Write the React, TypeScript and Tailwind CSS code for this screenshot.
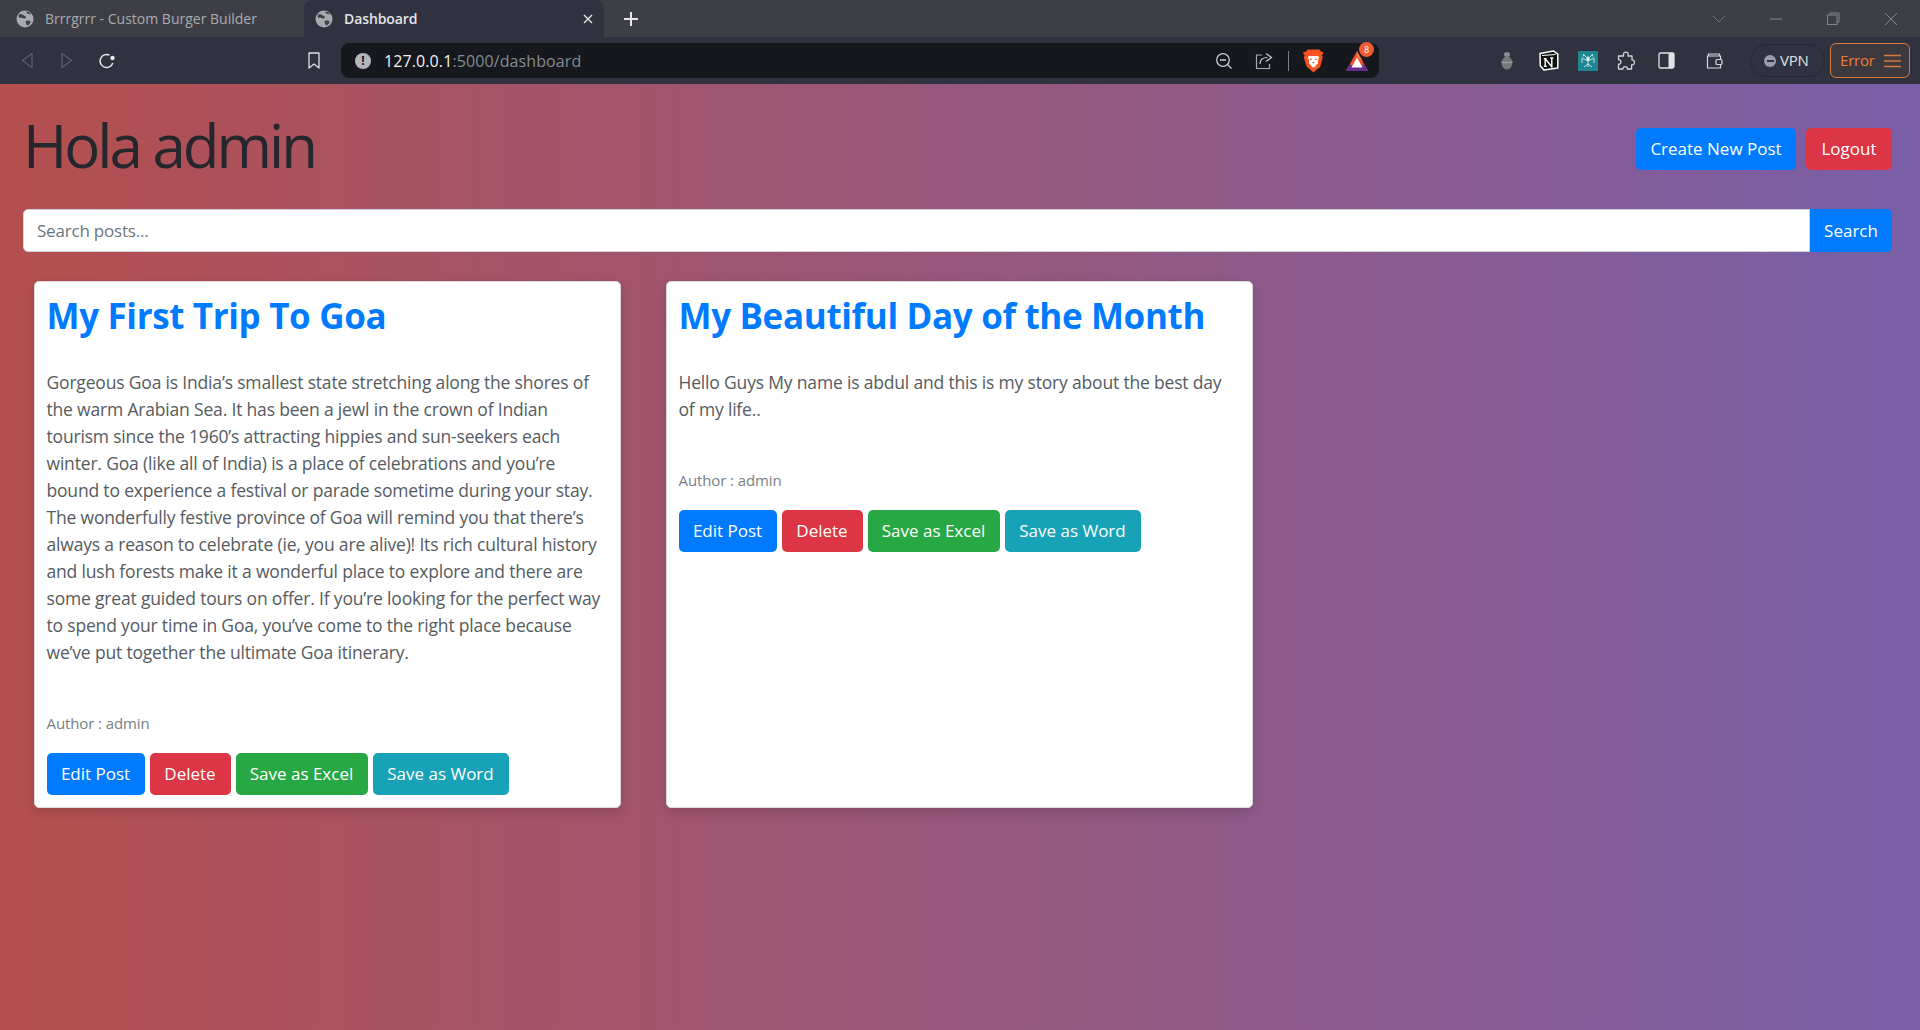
const posts = [
  {
    title: "My First Trip To Goa",
    body: "Gorgeous Goa is India’s smallest state stretching along the shores of the warm Arabian Sea. It has been a jewl in the crown of Indian tourism since the 1960’s attracting hippies and sun-seekers each winter. Goa (like all of India) is a place of celebrations and you’re bound to experience a festival or parade sometime during your stay. The wonderfully festive province of Goa will remind you that there’s always a reason to celebrate (ie, you are alive)! Its rich cultural history and lush forests make it a wonderful place to explore and there are some great guided tours on offer. If you’re looking for the perfect way to spend your time in Goa, you’ve come to the right place because we’ve put together the ultimate Goa itinerary.",
  },
  {
    title: "My Beautiful Day of the Month",
    body: "Hello Guys My name is abdul and this is my story about the best day of my life..",
  },
];

const Globe = () => (
  <svg width="18" height="18" viewBox="0 0 18 18">
    <circle cx="9" cy="9" r="8.5" fill="#a8aab0" />
    <path d="M3 4.500c2-.6 3.500-.2 4.500.8.800.9 2 .6 2.400 1.600.3 1-.9 1.600-2 1.500C6.600 8.300 5.500 7.500 4.500 7.700 3 8 1.800 7 3 4.500ZM10 11c1.500-.6 3.500-.5 4.500.3.500.7-.5 2.700-2.500 4-1 .5-1.600-.3-1.700-1.300-.1-1-1.400-2.400-.3-3Z" fill="#3f4048" />
    <path d="M10.500 1.500c1.500.2 3.600 1 4.500 2.700-1 .4-2.500 0-3.500-.6-.8-.5-1.300-1.400-1-2.100Z" fill="#3f4048" />
  </svg>
);

const Lion = () => (
  <svg width="21" height="24" viewBox="0 0 20 23">
    <path d="M4.500 0.500h11l2 2.200 2 .3-.5 2-1 1 .8 2.200-2.300 8.800-3 2.500-3.500 3-3.500-3-3-2.500L.7 8.200l.8-2.200-1-1L0 3l2.500-.3Z" fill="#f4521f" />
    <path d="M6 6.500l2.500.5L10 6.500l1.500.5 2.500-.5 1.500 1.500-1.500 3.500.5 2-2.500 2.500-.5 1.500h-3l-.5-1.500L5.500 13.500l.5-2L4.500 8Z" fill="#fff" />
    <path d="M8.700 12.500h2.600L10 14.200Z" fill="#f4521f" />
    <path d="M6.500 9.500l2 .6M13.500 9.500l-2 .6" stroke="#f4521f" strokeWidth="1" />
  </svg>
);

const BatLogo = () => (
  <div className="relative h-[22px] w-[24px]">
    <svg width="24" height="22" viewBox="0 0 24 22">
      <path d="M12 1 23 21H1Z" fill="#e8502f" />
      <path d="M12 1 17.500 11 12 7.500Z" fill="#f27a3c" />
      <path d="M5 14 1 21h22l-4-7-3 3H8Z" fill="#662d91" />
      <path d="M12 7.500 17.500 17.500h-11Z" fill="#fff" />
    </svg>
    <span className="absolute top-[-8px] left-[14px] flex h-[15px] w-[15px] items-center justify-center rounded-full bg-[#ee5a32] text-[9px] leading-none text-white">8</span>
  </div>
);

const Notion = () => (
  <svg width="20" height="21" viewBox="0 0 20 21">
    <path d="M1 3.500 14.500 1l4.300 3.200V18L5 20 1.300 15.800Z" fill="#111" stroke="#fff" strokeWidth="1.500" strokeLinejoin="round" />
    <path d="M3 5.500 16.500 4.500" stroke="#fff" strokeWidth="1" />
    <path d="M6.200 8.700v7.600M6.200 8.700l6.600 8V8M4.800 8.700h2.800M11.200 8h3.200M4.800 16.300h3" stroke="#fff" strokeWidth="1.400" fill="none" />
  </svg>
);

const TealSpider = () => (
  <svg width="20" height="20" viewBox="0 0 20 20">
    <rect width="20" height="20" fill="#1f8791" />
    <path d="M10 5v11M10 8 5 3M10 8l5-5M10 10 4 7v5M10 10l6-3v5M10 13l-4 3M10 13l4 3M6 3.500 5 5.500M14 3.500l1 2" stroke="#cfe8ea" strokeWidth=".9" fill="none" />
    <circle cx="10" cy="8" r="1.700" fill="#eaf6f7" />
  </svg>
);

const Bug = () => (
  <svg width="14" height="20" viewBox="0 0 14 20">
    <ellipse cx="7" cy="3.500" rx="3" ry="2.500" fill="#8b8c8f" />
    <ellipse cx="7" cy="12" rx="5.500" ry="6.500" fill="#77787a" />
    <path d="M1.500 11c3 1 8 1 11 0" stroke="#a8a9ab" strokeWidth="1" fill="none" />
  </svg>
);

const ToolIcon = ({ w, children }: { w: string; children: React.ReactNode }) => (
  <div className={`flex shrink-0 items-center justify-center ${w}`}>{children}</div>
);

const PostButton = ({ label, color, width }: { label: string; color: string; width: string }) => (
  <button className={`h-[42px] rounded-[5px] text-center text-[17px] text-white ${color} ${width}`}>{label}</button>
);

const PostCard = ({ title, body }: { title: string; body: string }) => (
  <div className="flex h-[527px] w-[587px] flex-col rounded-[5px] border border-[#d9d9d9] bg-white px-[11.500px] pt-[13px] pb-[11px] shadow-[0_4px_10px_rgba(0,0,0,0.14)]">
    <h2 className="text-[35px] leading-[42px] font-bold tracking-[-0.35px] text-[#007bff]">{title}</h2>
    <p className="mt-[32px] text-[17.500px] leading-[27px] tracking-[-0.18px] text-[#555b61]">{body}</p>
    <p className="mt-[46px] text-[15px] leading-[22px] tracking-[-0.1px] text-[#7a8087]">Author : admin</p>
    <div className="mt-[19px] flex">
      <PostButton label="Edit Post" color="bg-[#007bff]" width="w-[98px]" />
      <PostButton label="Delete" color="ml-[5px] bg-[#dc3545]" width="w-[81px]" />
      <PostButton label="Save as Excel" color="ml-[5px] bg-[#28a745]" width="w-[132px]" />
      <PostButton label="Save as Word" color="ml-[5px] bg-[#17a2b8]" width="w-[136px]" />
    </div>
  </div>
);

export default function App() {
  return (
    <div className="flex h-[1030px] w-full flex-col overflow-hidden font-['Open_Sans',sans-serif]">
      {/* tabs */}
      <div className="flex h-[37px] shrink-0 items-center bg-[#3e3e46]">
        <div className="flex h-full w-[304px] items-center pl-[16px] text-[14px] text-[#a9abb0]">
          <Globe />
          <span className="ml-[11px]">Brrrgrrr - Custom Burger Builder</span>
        </div>
        <div className="flex h-full w-[300px] items-center rounded-t-lg bg-[#30333f] pl-[11px] text-[14px] font-semibold tracking-[-0.1px] text-[#e4e5e8]">
          <Globe />
          <span className="ml-[11px] flex-1">Dashboard</span>
          <svg width="10" height="10" viewBox="0 0 10 10" className="mr-[11px]"><path d="M1 1l8 8M9 1 1 9" stroke="#e4e5e8" strokeWidth="1.400" /></svg>
        </div>
        <svg width="16" height="16" viewBox="0 0 16 16" className="ml-[19px]"><path d="M8 1v14M1 8h14" stroke="#e8e8ea" strokeWidth="2" /></svg>
        <div className="flex-1" />
        <svg width="14" height="8" viewBox="0 0 14 8" className="mr-[44px]"><path d="M1 1l6 6 6-6" stroke="#74757b" fill="none" /></svg>
        <svg width="12" height="2" viewBox="0 0 12 2" className="mr-[45px]"><path d="M0 1h12" stroke="#85868b" strokeWidth="1" /></svg>
        <svg width="13" height="13" viewBox="0 0 13 13" className="mr-[44px]"><path d="M3 3V1h9v9h-2" stroke="#85868b" fill="none" /><rect x=".5" y="3" width="9.500" height="9.500" stroke="#85868b" fill="none" /></svg>
        <svg width="14" height="14" viewBox="0 0 14 14" className="mr-[22px]"><path d="M1 1l12 12M13 1 1 13" stroke="#85868b" /></svg>
      </div>

      {/* toolbar */}
      <div className="flex h-[47px] shrink-0 items-center bg-[#30333f]">
        <svg width="12" height="17" viewBox="0 0 12 17" className="ml-[21px]"><path d="M11 1.500v14L1.500 8.500Z" stroke="#5b5e6a" strokeWidth="1.300" fill="none" strokeLinejoin="round" /></svg>
        <svg width="12" height="17" viewBox="0 0 12 17" className="ml-[28px]"><path d="M1 1.500v14l9.500-7Z" stroke="#5b5e6a" strokeWidth="1.300" fill="none" strokeLinejoin="round" /></svg>
        <svg width="16" height="16" viewBox="0 0 16 16" className="ml-[26px]"><path d="M13.800 10A6.500 6.500 0 1 1 10.500 2.200" stroke="#e8e9ec" strokeWidth="1.500" fill="none" /><circle cx="13.500" cy="5" r="2.200" fill="#e8e9ec" /></svg>
        <svg width="12" height="17" viewBox="0 0 12 17" className="ml-[193px]"><path d="M1 1h10v15L6 12l-5 4Z" stroke="#dfe0e4" strokeWidth="1.300" fill="none" strokeLinejoin="round" /></svg>
        <div className="ml-[21px] flex h-[35px] w-[1038px] items-center rounded-lg bg-[#16181d]">
          <div className="ml-[14px] flex h-[16px] w-[16px] items-center justify-center rounded-full bg-[#b4b6bb] text-[12px] leading-none font-bold text-[#16181d]">!</div>
          <span className="ml-[13px] flex-1 text-[16px] tracking-[0.1px] text-[#f2f2f3]">127.0.0.1<span className="text-[#858a93]">:5000/dashboard</span></span>
          <svg width="18" height="18" viewBox="0 0 18 18" className="mr-[22px]"><circle cx="8" cy="8" r="6.300" stroke="#c9cbd0" strokeWidth="1.300" fill="none" /><path d="M5 8h6M12.500 12.500 16.500 16.500" stroke="#c9cbd0" strokeWidth="1.300" /></svg>
          <svg width="18" height="18" viewBox="0 0 18 18" className="mr-[15px]"><path d="M7 3H1.500v13.500h13V12" stroke="#a9abb1" strokeWidth="1.200" fill="none" /><path d="M5 12c0-4.500 3-6.500 7.500-6.500M11 1.500l5.500 4-5.500 4" stroke="#c9cbd0" strokeWidth="1.200" fill="none" /></svg>
          <div className="h-[20px] w-px bg-[#7c7f86]" />
          <div className="ml-[14px]"><Lion /></div>
          <div className="mr-[10px] ml-[21px]"><BatLogo /></div>
        </div>
        <ToolIcon w="ml-[121px] w-[14px]"><Bug /></ToolIcon>
        <ToolIcon w="ml-[25px] w-[20px]"><Notion /></ToolIcon>
        <ToolIcon w="ml-[19px] w-[20px]"><TealSpider /></ToolIcon>
        <ToolIcon w="ml-[18px] w-[20px]">
          <svg width="20" height="20" viewBox="0 0 20 20"><path d="M7.500 3.500c0-3.500 5-3 4.700 0l-.2 1.500h4v4c3-.5 3.500 5 0 4.800h-.4v4.200h-4.300c.5-3-4.300-3.500-4.300 0H2.500v-4.800c3 .5 3.500-4.500 0-4.500V5h5Z" stroke="#d3d4d9" strokeWidth="1.300" fill="none" strokeLinejoin="round" /></svg>
        </ToolIcon>
        <ToolIcon w="ml-[22px] w-[17px]">
          <svg width="17" height="17" viewBox="0 0 17 17"><rect x="1" y="1" width="15" height="15" rx="1.500" stroke="#e2e3e6" strokeWidth="1.300" fill="none" /><rect x="10.500" y="1" width="5.500" height="15" fill="#e2e3e6" /></svg>
        </ToolIcon>
        <ToolIcon w="ml-[31px] w-[17px]">
          <svg width="17" height="17" viewBox="0 0 17 17"><path d="M2.500 4V2h11v2M14.500 8V4H1.500v12h13v-3" stroke="#d8d9dd" strokeWidth="1.200" fill="none" /><rect x="10" y="7.500" width="6" height="5" rx="1" stroke="#d8d9dd" strokeWidth="1.200" fill="none" /></svg>
        </ToolIcon>
        <div className="ml-[27px] flex h-[33px] w-[75px] items-center rounded-full border border-[#262834] pl-[13px] text-[15px] tracking-[-0.2px] text-[#dfe0e4]">
          <div className="flex h-[12px] w-[12px] items-center justify-center rounded-full bg-[#9a9db0]"><div className="h-[2px] w-[7px] bg-[#30333f]" /></div>
          <span className="ml-[4px]">VPN</span>
        </div>
        <div className="ml-[5px] flex h-[35px] w-[80px] items-center rounded-md border border-[#d7793a] bg-[#3d3a3f] pl-[9px] text-[15px] tracking-[-0.2px] text-[#ee7d3a]">
          <span className="flex-1">Error</span>
          <svg width="17" height="14" viewBox="0 0 17 14" className="mr-[8px]"><path d="M0 1.500h17M0 7h17M0 12.500h17" stroke="#d7793a" strokeWidth="1.500" /></svg>
        </div>
      </div>

      {/* page */}
      <div className="flex-1 bg-[linear-gradient(to_right,#b44f4e,#7a5fa8)] px-[23px] pt-[20px]">
        <div className="flex h-[90px] items-center justify-between pr-[5px]">
          <h1 className="mt-[-8px] text-[60px] leading-[70px] font-normal tracking-[-3px] text-[#25272c]">Hola admin</h1>
          <div className="flex">
            <button className="h-[42px] w-[160px] rounded-[5px] bg-[#007bff] text-[17px] text-white">Create New Post</button>
            <button className="ml-[10px] h-[42px] w-[86px] rounded-[5px] bg-[#dc3545] text-[17px] text-white">Logout</button>
          </div>
        </div>
        <div className="mt-[15px] mr-[5px] flex h-[43px]">
          <input placeholder="Search posts..." className="h-full flex-1 rounded-l-[5px] border border-[#ced4da] bg-white pl-[13px] text-[17px] tracking-[-0.2px] placeholder:text-[#6c757d]" />
          <button className="h-full w-[82px] rounded-r-[5px] bg-[#007bff] text-[17px] text-white">Search</button>
        </div>
        <div className="mt-[29px] ml-[11px] flex gap-[45px]">
          {posts.map((post) => (
            <PostCard key={post.title} title={post.title} body={post.body} />
          ))}
        </div>
      </div>
    </div>
  );
}
